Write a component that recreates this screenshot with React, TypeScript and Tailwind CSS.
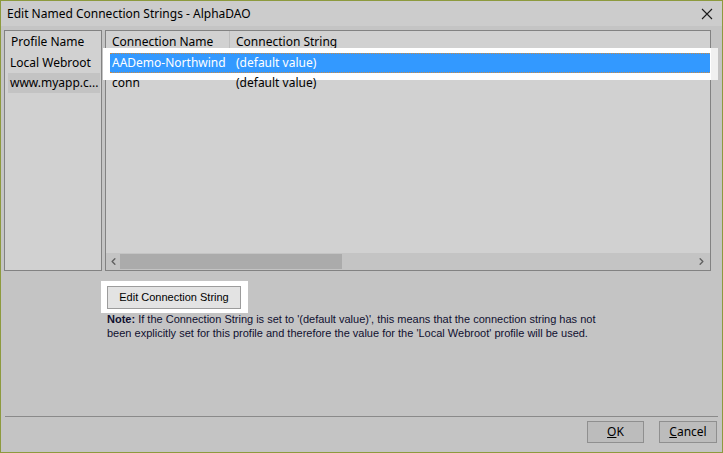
import { ChevronLeft, ChevronRight } from 'lucide-react'

const profiles = [
  { name: 'Local Webroot', selected: false },
  { name: 'www.myapp.c...', selected: true },
]

const connections = [
  { name: 'AADemo-Northwind', value: '(default value)', active: true },
  { name: 'conn', value: '(default value)', active: false },
]

const narrow = { fontFamily: '"Liberation Sans", Arial, sans-serif' }

export default function App() {
  return (
    <div
      className="w-[723px] h-[453px] flex flex-col border border-[#8d9a3e] bg-[#c4c4c4] text-[12px] text-black"
      style={{ fontFamily: '"Segoe UI", "Noto Sans", sans-serif' }}
    >
      {/* Title bar */}
      <div className="h-[25px] flex items-center justify-between bg-[#cccccc] pl-[6px] pr-[9px]">
        <span>Edit Named Connection Strings - AlphaDAO</span>
        <svg width="12" height="12" viewBox="0 0 12 12" className="mt-[1px]">
          <path d="M1 1 L11 11 M11 1 L1 11" stroke="#1a1a1a" strokeWidth="1.1" />
        </svg>
      </div>

      {/* Body */}
      <div className="flex-1 flex flex-col pt-[4px]">
        <div className="flex gap-[3px] pl-[3px] pr-[11px]">
          {/* Profiles list */}
          <div className="w-[98px] h-[241px] border border-[#828282] bg-[#d1d1d1] flex flex-col">
            <div className="h-[22px] flex items-center pl-[6px]">Profile Name</div>
            {profiles.map((p) => (
              <div
                key={p.name}
                className={
                  'h-[20px] ml-[3px] mr-[1px] flex items-center pl-[2px] whitespace-nowrap ' +
                  (p.selected ? 'bg-[#c3c3c3]' : '')
                }
              >
                {p.name}
              </div>
            ))}
          </div>

          {/* Connections grid */}
          <div className="flex-1 h-[241px] border border-[#828282] bg-[#d1d1d1] flex flex-col">
            <div className="h-[22px] flex items-center">
              <div className="w-[124px] h-full flex items-center pl-[6px] border-r border-[#bdbdbd]">
                Connection Name
              </div>
              <div className="pl-[6px]">Connection String</div>
            </div>
            <div className="flex flex-col">
              {connections.map((c) => (
                <div key={c.name} className="relative h-[20px] ml-[4px]">
                  {c.active && (
                    <div className="absolute -left-[7px] -top-[5px] -right-[8px] -bottom-[7px] bg-white">
                      <div className="absolute right-0 top-0 bottom-0 w-[7px] bg-[#f0f0f0]" />
                    </div>
                  )}
                  <div
                    className={
                      'relative h-full flex items-center ' +
                      (c.active
                        ? 'bg-[#3399ff] text-white border-y border-dotted border-[#c98a44]'
                        : '')
                    }
                  >
                    <div className="w-[126px] pl-[2px]">{c.name}</div>
                    <div>{c.value}</div>
                  </div>
                </div>
              ))}
            </div>

            {/* Horizontal scrollbar */}
            <div className="mt-auto h-[17px] bg-[#c4c4c4] flex items-center">
              <ChevronLeft size={11} strokeWidth={3} className="text-[#606060] ml-[2px]" />
              <div className="w-[222px] h-[15px] bg-[#ababab] ml-[1px]" />
              <div className="flex-1" />
              <ChevronRight size={11} strokeWidth={3} className="text-[#606060] mr-[3px]" />
            </div>
          </div>
        </div>

        {/* Edit button + note */}
        <div className="pl-[106px] mt-[15px]" style={narrow}>
          <div className="relative w-[134px] h-[23px]">
            <div className="absolute -left-[6px] -top-[5px] -right-[7px] -bottom-[4px] bg-white" />
            <button className="relative w-full h-full bg-[#e3e3e3] border border-[#9c9c9c] text-[11px]">
              Edit Connection String
            </button>
          </div>
          <div className="mt-[3px] text-[11px] leading-[14px] text-[#101030]">
            <div>
              <b>Note:</b> If the Connection String is set to '(default value)', this means that the
              connection string has not
            </div>
            <div>
              been explicitly set for this profile and therefore the value for the 'Local Webroot'
              profile will be used.
            </div>
          </div>
        </div>

        {/* Footer */}
        <div className="mt-auto mx-[4px] border-t border-[#8a8a8a] flex justify-end gap-[15px] pt-[4px] pb-[9px] pr-[1px]">
          <button className="w-[57px] h-[22px] bg-[#bcbcbc] border border-[#8f8f8f]">
            <span className="underline">O</span>K
          </button>
          <button className="w-[58px] h-[22px] bg-[#bcbcbc] border border-[#8f8f8f]">
            <span className="underline">C</span>ancel
          </button>
        </div>
      </div>
    </div>
  )
}
